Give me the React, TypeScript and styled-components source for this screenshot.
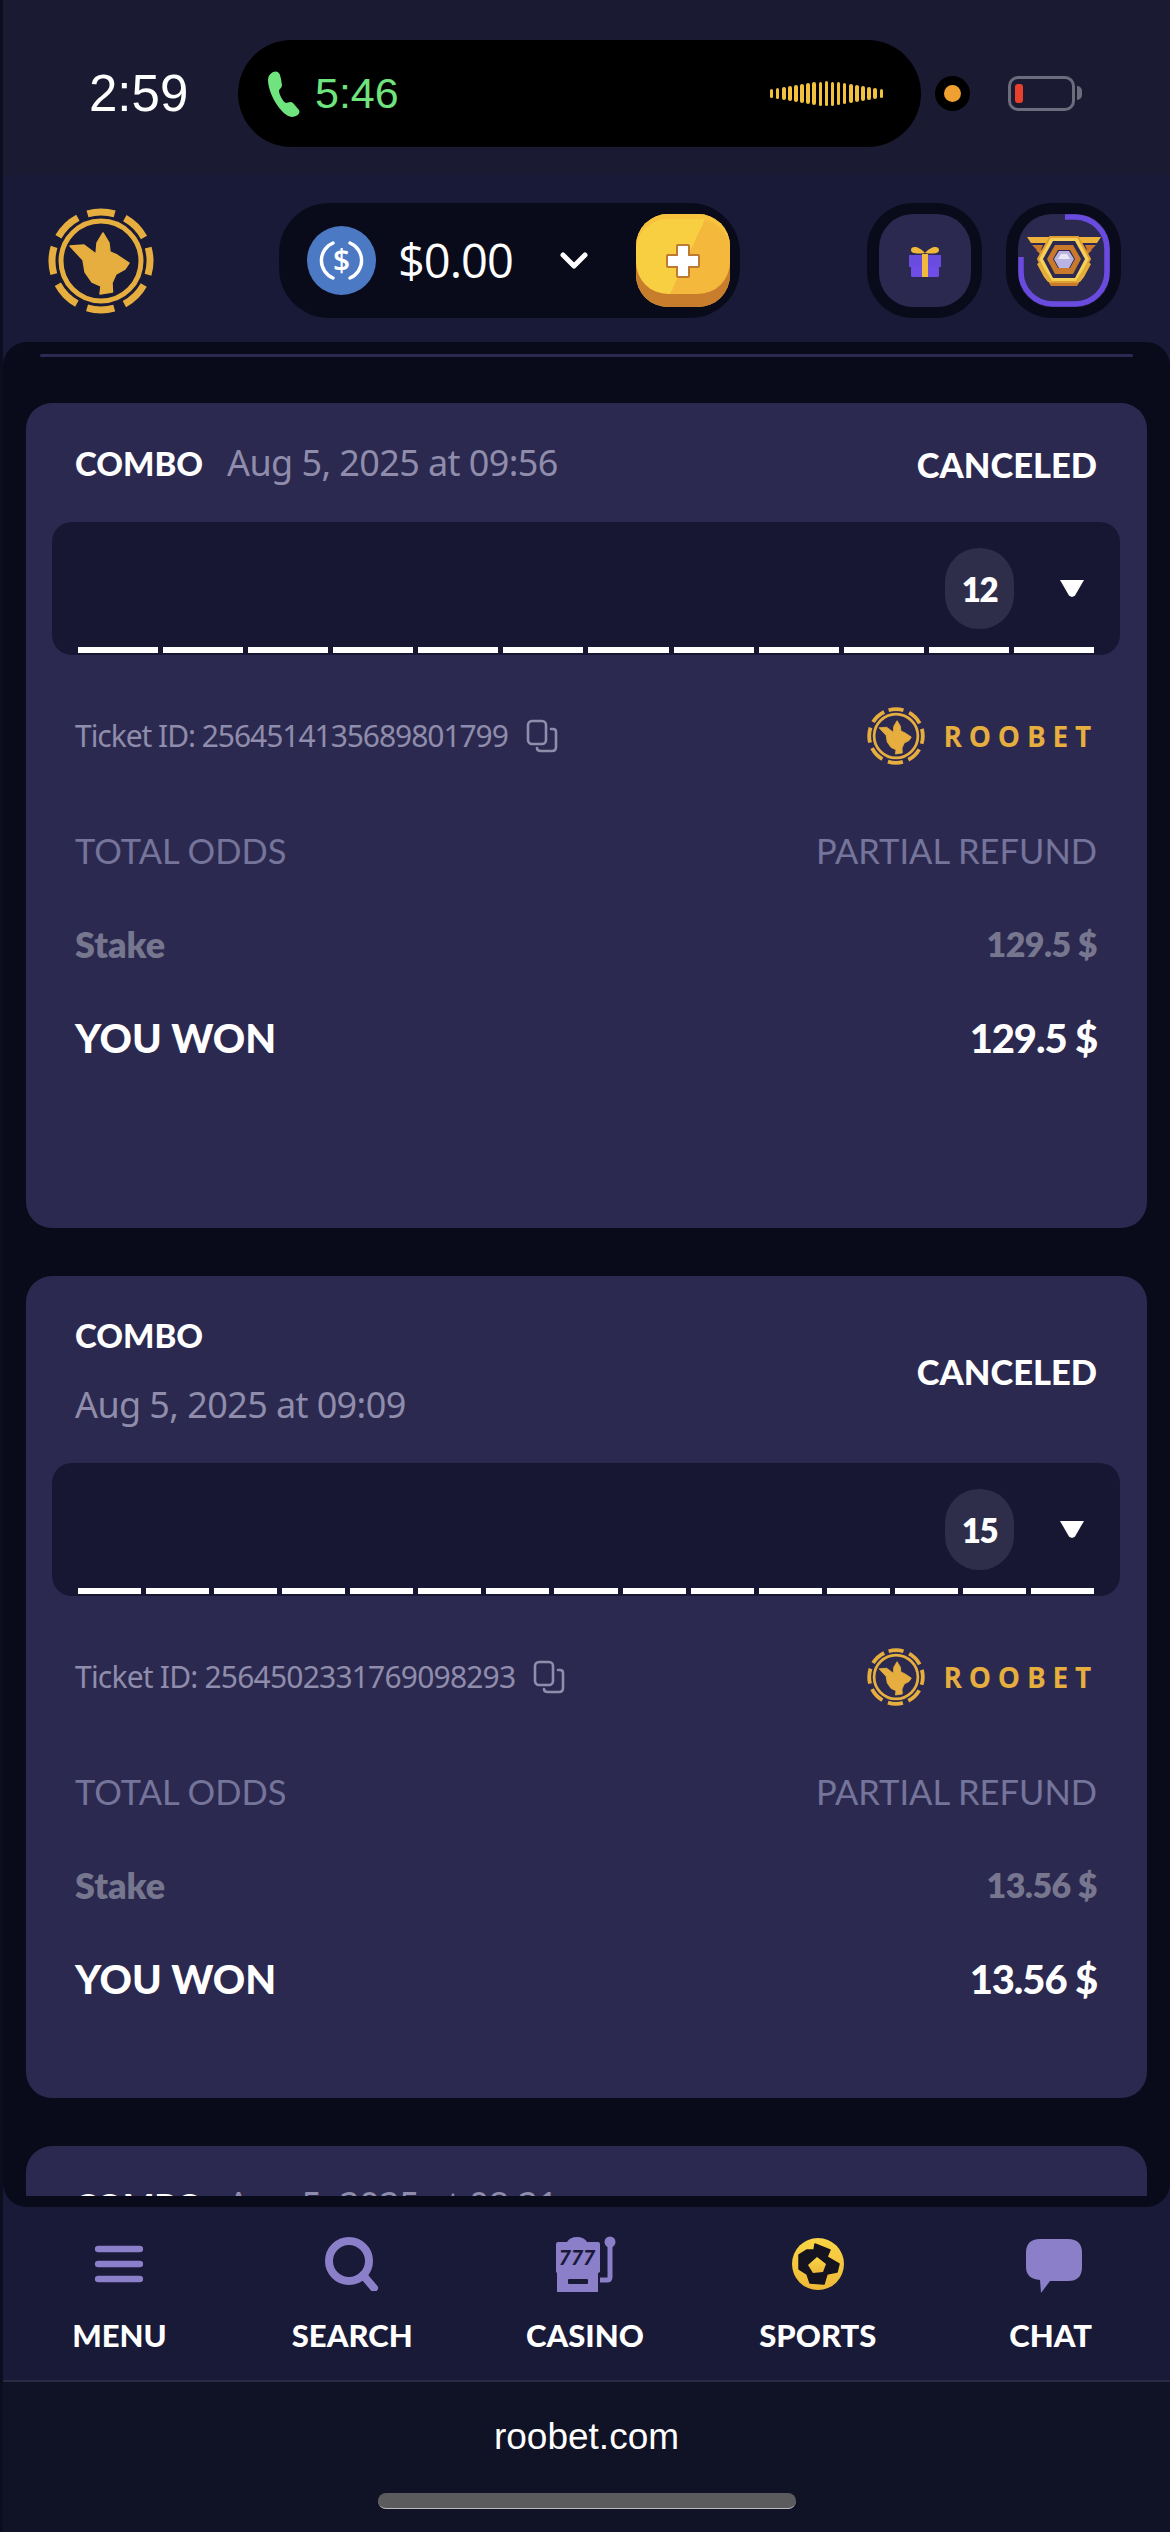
import React from 'react';
import styled, { createGlobalStyle } from 'styled-components';

const GlobalStyle = createGlobalStyle`
  html, body { margin: 0; padding: 0; background: #1a1b33; }
  * { box-sizing: border-box; }
`;

const Screen = styled.div`
  width: 1170px;
  height: 2532px;
  display: flex;
  flex-direction: column;
  overflow: hidden;
  background: #191938;
  font-family: 'Lato', 'Liberation Sans', sans-serif;
  color: #fff;
  border-left: 3px solid #0c0d1e;
`;

const StatusBar = styled.div`
  height: 175px;
  flex: none;
  background: #1a1b33;
  display: flex;
  align-items: flex-start;
  padding: 40px 0 0 0;
`;

const Clock = styled.div`
  width: 235px;
  padding: 28px 0 0 86px;
  font: 500 51px/51px 'Liberation Sans', sans-serif;
  flex: none;
`;

const Island = styled.div`
  width: 683px;
  height: 107px;
  flex: none;
  border-radius: 54px;
  background: #000;
  display: flex;
  align-items: center;
  padding: 0 38px 0 30px;
  color: #6fe37e;
  font: 500 43px/43px 'Liberation Sans', sans-serif;
  gap: 15px;
`;

const Wave = styled.div`
  margin-left: auto;
  display: flex;
  align-items: center;
  gap: 2.6px;
`;

const WaveBar = styled.i<{ $h: number }>`
  display: block;
  width: 3.5px;
  height: ${(p) => p.$h}px;
  border-radius: 2px;
  background: #f2c23c;
`;

const CallDot = styled.div`
  flex: none;
  width: 35px;
  height: 35px;
  margin: 36px 0 0 14px;
  border-radius: 50%;
  background: #000;
  display: flex;
  align-items: center;
  justify-content: center;

  &::after {
    content: '';
    width: 17px;
    height: 17px;
    border-radius: 50%;
    background: #f0a030;
  }
`;

const Battery = styled.div`
  flex: none;
  position: relative;
  width: 67px;
  height: 35px;
  margin: 36px 0 0 38px;
  border: 3px solid #6b6c7c;
  border-radius: 10px;
  padding: 5px 4px;

  &::before {
    content: '';
    display: block;
    width: 8px;
    height: 100%;
    border-radius: 3px;
    background: #e8402c;
  }

  &::after {
    content: '';
    position: absolute;
    right: -10px;
    top: 7px;
    width: 5px;
    height: 14px;
    border-radius: 0 5px 5px 0;
    background: #6b6c7c;
  }
`;

const Header = styled.header`
  height: 167px;
  flex: none;
  display: flex;
  align-items: flex-start;
  padding: 28px 0 0 45px;
`;

const LogoSlot = styled.div`
  flex: none;
  width: 231px;
  padding-top: 5px;
`;

const BalancePill = styled.div`
  flex: none;
  width: 461px;
  height: 115px;
  border-radius: 50px;
  background: #0a0b1a;
  display: flex;
  align-items: center;
  padding: 0 10px 0 28px;
`;

const Amount = styled.span`
  margin-left: 22px;
  font: 500 47px/1 'Open Sans', sans-serif;
  letter-spacing: -1px;
`;

const ChevronSlot = styled.span`
  margin-left: 47px;
  display: flex;
`;

const PlusButton = styled.div`
  margin-left: auto;
  width: 94px;
  height: 93px;
  border-radius: 32px;
  background: linear-gradient(115deg, #f9cf42 0 52%, #f4b93c 52% 100%);
  box-shadow: inset 0 -13px 0 #c77d2c, inset 0 5px 0 #f7c33e;
  display: flex;
  align-items: center;
  justify-content: center;
`;

const IconHolder = styled.div<{ $gap: number }>`
  flex: none;
  width: 115px;
  height: 115px;
  margin-left: ${(p) => p.$gap}px;
  border-radius: 46px;
  background: #0a0b1a;
  display: flex;
  align-items: center;
  justify-content: center;
`;

const IconTile = styled.div`
  position: relative;
  width: 92px;
  height: 93px;
  border-radius: 34px;
  background: #2c2950;
  display: flex;
  align-items: center;
  justify-content: center;
`;

const Ring = styled.svg`
  position: absolute;
  inset: 0;
`;

const Panel = styled.main`
  height: 865px;
  flex: 1 0 auto;
  background: #0a0b1a;
  border-radius: 24px;
  padding: 12px 23px 11px;
  display: flex;
  flex-direction: column;
`;

const Divider = styled.div`
  height: 3px;
  flex: none;
  margin: 0 14px 46px;
  background: #2c2a52;
  border-radius: 2px;
`;

const Feed = styled.div`
  flex: 1;
  overflow: hidden;
  display: flex;
  flex-direction: column;
  gap: 48px;
`;

const Card = styled.section<{ $bottom: number }>`
  flex: none;
  background: #2c2950;
  border-radius: 26px;
  padding: 32px 27px ${(p) => p.$bottom}px 26px;
`;

const CardTop = styled.div<{ $stacked?: boolean }>`
  display: flex;
  align-items: center;
  justify-content: space-between;
  padding: 0 23px ${(p) => (p.$stacked ? 17 : 0)}px;
  min-height: ${(p) => (p.$stacked ? 140 : 54)}px;
  margin-bottom: ${(p) => (p.$stacked ? 15 : 32)}px;
`;

const BetTitle = styled.div<{ $stacked?: boolean }>`
  display: flex;
  flex-direction: ${(p) => (p.$stacked ? 'column' : 'row')};
  align-items: ${(p) => (p.$stacked ? 'flex-start' : 'center')};
  gap: ${(p) => (p.$stacked ? '20px' : '24px')};
`;

const BetType = styled.span`
  font-size: 33px;
  font-weight: 900;
  line-height: 50px;
`;

const BetDate = styled.span`
  font: 400 36px/50px 'Noto Sans', sans-serif;
  color: #8f8dab;
  letter-spacing: -0.6px;
`;

const BetStatus = styled.span`
  margin-top: 5px;
  font-size: 34.5px;
  font-weight: 900;
  line-height: 50px;
`;

const Legs = styled.div`
  height: 133px;
  background: #181733;
  border-radius: 20px;
  padding: 26px 26px 3px;
  display: flex;
  flex-direction: column;
`;

const LegsTop = styled.div`
  display: flex;
  align-items: center;
  justify-content: flex-end;
  flex: 1;
  align-self: stretch;
  gap: 46px;
  padding-bottom: 18px;
`;

const CountBadge = styled.div`
  width: 69px;
  height: 81px;
  border-radius: 34px;
  background: #2f2e4a;
  display: flex;
  align-items: center;
  justify-content: center;
  font-size: 33px;
  font-weight: 800;
  letter-spacing: -1.5px;
`;

const Caret = styled.div`
  width: 24px;
  height: 17px;
  margin-right: 10px;
  clip-path: polygon(0 0, 100% 0, 62% 92%, 50% 100%, 38% 92%);
  background: #fff;
`;

const SegmentRow = styled.div`
  display: flex;
  gap: 5px;
`;

const Segment = styled.i`
  display: block;
  flex: 1;
  height: 6px;
  background: #fff;
`;

const TicketRow = styled.div`
  display: flex;
  align-items: center;
  justify-content: space-between;
  height: 60px;
  margin: 51px 0 0;
  padding: 0 29px 0 23px;
`;

const TicketId = styled.div<{ $spacing: number }>`
  display: flex;
  align-items: center;
  gap: 18px;
  font: 400 30px/1 'Noto Sans', sans-serif;
  letter-spacing: ${(p) => p.$spacing}px;
  color: #8f8dab;
`;

const Brand = styled.div`
  display: flex;
  align-items: center;
  gap: 18px;
`;

const BrandName = styled.span`
  font: 700 28px/1 'Open Sans', sans-serif;
  letter-spacing: 6.8px;
  color: #e5ae3e;
  margin-right: -7px;
`;

const Line = styled.div<{ $top: number }>`
  display: flex;
  justify-content: space-between;
  align-items: center;
  padding: 0 23px;
  margin-top: ${(p) => p.$top}px;
`;

const OddsText = styled.span`
  font-size: 34.5px;
  font-weight: 400;
  line-height: 44px;
  color: #75749a;
`;

const StakeText = styled.span`
  font-size: 36px;
  font-weight: 800;
  line-height: 44px;
  color: #77768f;
`;

const StakeValue = styled(StakeText)`
  font-size: 34px;
  letter-spacing: -0.6px;
`;

const WonText = styled.span`
  font-size: 40px;
  font-weight: 900;
  line-height: 50px;
  color: #fff;
`;

const WonValue = styled(WonText)`
  letter-spacing: -1.1px;
`;

const BottomNav = styled.nav`
  height: 175px;
  flex: none;
  display: grid;
  grid-template-columns: repeat(5, 1fr);
  padding: 27px 3px 0 0;
  border-bottom: 2px solid #2a2a44;
`;

const NavItem = styled.div`
  display: flex;
  flex-direction: column;
  align-items: center;
  gap: 21px;
`;

const NavIcon = styled.div`
  height: 60px;
  display: flex;
  align-items: center;
  justify-content: center;
`;

const NavLabel = styled.span`
  font-size: 31px;
  font-weight: 900;
  line-height: 40px;
`;

const BrowserBar = styled.footer`
  height: 150px;
  flex: none;
  background: #101226;
  display: flex;
  flex-direction: column;
  align-items: center;
  padding-top: 34px;
`;

const UrlText = styled.span`
  font: 400 37px/42px 'Liberation Sans', sans-serif;
`;

const HomeBar = styled.div`
  width: 418px;
  height: 16px;
  margin-top: 35px;
  border-radius: 8px;
  background: #5b5b5e;
  border-bottom: 1px solid #bbb;
`;

const GOLD = '#e5ae3e';
const NAV_PURPLE = '#8b7fc9';

const RooLogo = ({ size }: { size: number }) => (
  <svg width={size} height={size} viewBox="0 0 106 106" style={{ display: 'block' }}>
    <circle
      cx="53"
      cy="53"
      r="49"
      fill="none"
      stroke={GOLD}
      strokeWidth="7"
      strokeDasharray="27.5 11"
      transform="rotate(-106 53 53)"
    />
    <circle cx="53" cy="53" r="40" fill="none" stroke={GOLD} strokeWidth="5" />
    <path
      d="M22 38 L36 37 L48 46 L49 35 L55 25 L61 35 L62 44 L69 47 L81 55 L77 61 L68 66 L64 75 L64.5 84 L52 86 L53 78 L44 74 L37 64 L35 52Z"
      fill={GOLD}
      stroke={GOLD}
      strokeWidth="1.5"
      strokeLinejoin="round"
    />
  </svg>
);

const PhoneIcon = () => (
  <svg width="32" height="46" viewBox="0 0 32 46">
    <path
      d="M5 1 C10 -1 12 2 13 8 L14 14 C14 17 11 18 11 20 C11 23 15 31 18 32 C20 32 22 30 25 32 L31 39 C33 43 28 46 24 46 C13 45 0 22 0 9 C0 5 2 3 5 1Z"
      fill="#6fe37e"
    />
  </svg>
);

const UsdcIcon = () => (
  <svg width="69" height="69" viewBox="0 0 69 69" style={{ flex: 'none' }}>
    <circle cx="34.5" cy="34.5" r="34.5" fill="#4b79c4" />
    <path d="M26 17 A19 19 0 0 0 26 52" fill="none" stroke="#fff" strokeWidth="3.4" strokeLinecap="round" />
    <path d="M43 17 A19 19 0 0 1 43 52" fill="none" stroke="#fff" strokeWidth="3.4" strokeLinecap="round" />
    <text x="34.5" y="45" textAnchor="middle" fontFamily="Open Sans" fontWeight="600" fontSize="30" fill="#fff">
      $
    </text>
  </svg>
);

const ChevronIcon = () => (
  <svg width="28" height="20" viewBox="0 0 28 20">
    <path d="M3 4 L14 15 L25 4" fill="none" stroke="#fff" strokeWidth="5" strokeLinecap="round" strokeLinejoin="round" />
  </svg>
);

const PlusIcon = () => (
  <svg width="40" height="40" viewBox="0 0 40 40">
    <path
      d="M15 5 H25 V15 H35 V25 H25 V35 H15 V25 H5 V15 H15Z"
      fill="#fff"
      stroke="#bd7a30"
      strokeWidth="4"
      strokeLinejoin="round"
      paintOrder="stroke"
    />
  </svg>
);

const GiftIcon = () => (
  <svg width="34" height="34" viewBox="0 0 34 34">
    <path d="M17 9 C10 1 3 2 3 6 C3 10 10 10 17 9 C24 10 31 10 31 6 C31 2 24 1 17 9Z" fill="#f0b93a" />
    <path d="M1 11 H33 V23 H1Z" fill="#6a4be0" />
    <path d="M3 22 H31 V32 Q31 33 29 33 H5 Q3 33 3 32Z" fill="#6d4de6" />
    <path d="M14 10 H20 V33 H14Z" fill="#f0b93a" />
  </svg>
);

const RankIcon = () => (
  <svg width="74" height="50" viewBox="0 0 74 50" style={{ position: 'relative' }}>
    <path d="M0 1 H74 L70 7 H4Z" fill="#eeb33c" />
    <path d="M5 9 H16 L14 14 H10Z M9 14 H17 L15 20Z" fill="#c9782c" />
    <path d="M69 9 H58 L60 14 H64Z M65 14 H57 L59 20Z" fill="#c9782c" />
    <path d="M23 1 H51 L63 23 L51 46 H23 L11 23Z" fill="#f4d05a" stroke="#e0a030" strokeWidth="2" />
    <path d="M26 5 H48 L58 23 L48 42 H26 L16 23Z" fill="#2c2950" />
    <path d="M28 9 H46 L54 23 L46 38 H28 L20 23Z" fill="#c9782c" />
    <path d="M31 14 H43 L48 23 L43 32 H31 L26 23Z" fill="#2c2950" />
    <path d="M32 15 H42 L47 23 L42 32 H32 L27 23Z" fill="#b9b3e2" />
    <path d="M34 18 H40 L43 23 H31Z" fill="#e8e6f7" />
    <path d="M10 28 L17 41 L21 46 H26 L13 26Z M64 28 L57 41 L53 46 H48 L61 26Z" fill="#e6ac38" />
    <path d="M22 47 H52 L50 50 H24Z" fill="#c9782c" />
  </svg>
);

const RankRing = () => (
  <Ring width="92" height="93" viewBox="0 0 92 93">
    <path
      d="M47 3 H57 A32 32 0 0 1 89 35 V58 A32 32 0 0 1 57 90 H35 A32 32 0 0 1 3 58 V43"
      fill="none"
      stroke="#6a4be0"
      strokeWidth="5.5"
    />
  </Ring>
);

const CopyIcon = () => (
  <svg width="32" height="34" viewBox="0 0 32 34" fill="none" stroke="#8f8dab" strokeWidth="2.6">
    <rect x="2" y="2" width="18" height="23" rx="4" />
    <path d="M25 10 H27 Q30 10 30 13 V28 Q30 32 26 32 H15 Q11 32 11 29" strokeLinecap="round" />
  </svg>
);

const MenuIcon = () => (
  <svg width="48" height="40" viewBox="0 0 48 40">
    <path d="M3 5 H45 M3 20 H45 M3 35 H45" stroke={NAV_PURPLE} strokeWidth="6.5" strokeLinecap="round" />
  </svg>
);

const SearchIcon = () => (
  <svg width="54" height="54" viewBox="0 0 54 54" fill="none" stroke={NAV_PURPLE}>
    <circle cx="24" cy="24" r="20" strokeWidth="8" />
    <path d="M38 38 L49 51" strokeWidth="8" strokeLinecap="round" />
  </svg>
);

const SlotIcon = () => (
  <svg width="62" height="56" viewBox="0 0 62 56">
    <path
      d="M2 8 Q2 6 4 6 H13 Q16 1 23 1 Q30 1 33 6 H44 Q46 6 46 8 V36 L44 37 V56 H3 V37 L2 36Z"
      fill={NAV_PURPLE}
    />
    <text x="23" y="29" textAnchor="middle" fontFamily="Lato" fontStyle="italic" fontWeight="900" fontSize="21" fill="#191938">
      777
    </text>
    <rect x="14" y="43" width="20" height="5" rx="1" fill="#191938" />
    <circle cx="56" cy="6" r="5.5" fill={NAV_PURPLE} />
    <path d="M56 8 V41 Q56 44 53 44 H46" fill="none" stroke={NAV_PURPLE} strokeWidth="5" />
  </svg>
);

const BallIcon = () => (
  <svg width="52" height="52" viewBox="0 0 52 52">
    <defs>
      <linearGradient id="ballGold" x1="0" y1="0" x2="0" y2="1">
        <stop offset="0" stopColor="#fad545" />
        <stop offset="1" stopColor="#eeb938" />
      </linearGradient>
    </defs>
    <circle cx="26" cy="26" r="26" fill="url(#ballGold)" />
    <path
      d="M23 6 L38 12 L35 19 L47 26 L45 34 L35 36 L32 46 L18 45 L15 36 L7 31 L7 17 L15 12 L22 12Z"
      fill="#14131f"
      stroke="#14131f"
      strokeWidth="1.5"
      strokeLinejoin="round"
    />
    <path d="M25 19 L34 26 L31 34 L21 35 L16 27Z" fill="url(#ballGold)" />
  </svg>
);

const ChatIcon = () => (
  <svg width="62" height="60" viewBox="-6 -5 62 60">
    <path
      d="M14 0 H42 Q56 0 56 14 V28 Q56 42 42 42 H24 L15 54 L14 41 Q0 40 0 28 V14 Q0 0 14 0Z"
      fill={NAV_PURPLE}
    />
  </svg>
);

type Bet = {
  date: string;
  stacked?: boolean;
  legs: number;
  ticket: string;
  idSpacing: number;
  stake: string;
  bottom: number;
};

const bets: Bet[] = [
  { date: 'Aug 5, 2025 at 09:56', legs: 12, ticket: '2564514135689801799', idSpacing: -1.05, stake: '129.5 $', bottom: 165 },
  { date: 'Aug 5, 2025 at 09:09', stacked: true, legs: 15, ticket: '2564502331769098293', idSpacing: -0.8, stake: '13.56 $', bottom: 94 },
];

const navItems = [
  { label: 'MENU', icon: <MenuIcon /> },
  { label: 'SEARCH', icon: <SearchIcon /> },
  { label: 'CASINO', icon: <SlotIcon /> },
  { label: 'SPORTS', icon: <BallIcon /> },
  { label: 'CHAT', icon: <ChatIcon /> },
];

const waveHeights = [9, 11, 13, 15, 17, 19, 21, 23, 24, 25, 24, 23, 21, 19, 17, 15, 13, 11, 9];

export default function App() {
  return (
    <Screen>
      <GlobalStyle />
      <StatusBar>
        <Clock>2:59</Clock>
        <Island>
          <PhoneIcon />
          <span>5:46</span>
          <Wave>
            {waveHeights.map((h, i) => (
              <WaveBar key={i} $h={h} />
            ))}
          </Wave>
        </Island>
        <CallDot />
        <Battery />
      </StatusBar>

      <Header>
        <LogoSlot>
          <RooLogo size={106} />
        </LogoSlot>
        <BalancePill>
          <UsdcIcon />
          <Amount>$0.00</Amount>
          <ChevronSlot>
            <ChevronIcon />
          </ChevronSlot>
          <PlusButton>
            <PlusIcon />
          </PlusButton>
        </BalancePill>
        <IconHolder $gap={127}>
          <IconTile>
            <GiftIcon />
          </IconTile>
        </IconHolder>
        <IconHolder $gap={24}>
          <IconTile>
            <RankRing />
            <RankIcon />
          </IconTile>
        </IconHolder>
      </Header>

      <Panel>
        <Divider />
        <Feed>
          {bets.map((bet) => (
            <Card key={bet.ticket} $bottom={bet.bottom}>
              <CardTop $stacked={bet.stacked}>
                <BetTitle $stacked={bet.stacked}>
                  <BetType>COMBO</BetType>
                  <BetDate>{bet.date}</BetDate>
                </BetTitle>
                <BetStatus>CANCELED</BetStatus>
              </CardTop>
              <Legs>
                <LegsTop>
                  <CountBadge>{bet.legs}</CountBadge>
                  <Caret />
                </LegsTop>
                <SegmentRow>
                  {Array.from({ length: bet.legs }, (_, i) => (
                    <Segment key={i} />
                  ))}
                </SegmentRow>
              </Legs>
              <TicketRow>
                <TicketId $spacing={bet.idSpacing}>
                  Ticket ID: {bet.ticket}
                  <CopyIcon />
                </TicketId>
                <Brand>
                  <RooLogo size={58} />
                  <BrandName>ROOBET</BrandName>
                </Brand>
              </TicketRow>
              <Line $top={63}>
                <OddsText>TOTAL ODDS</OddsText>
                <OddsText>PARTIAL REFUND</OddsText>
              </Line>
              <Line $top={49}>
                <StakeText>Stake</StakeText>
                <StakeValue>{bet.stake}</StakeValue>
              </Line>
              <Line $top={47}>
                <WonText>YOU WON</WonText>
                <WonValue>{bet.stake}</WonValue>
              </Line>
            </Card>
          ))}
          <Card $bottom={96}>
            <CardTop>
              <BetTitle>
                <BetType>COMBO</BetType>
                <BetDate>Aug 5, 2025 at 08:21</BetDate>
              </BetTitle>
            </CardTop>
          </Card>
        </Feed>
      </Panel>

      <BottomNav>
        {navItems.map((item) => (
          <NavItem key={item.label}>
            <NavIcon>{item.icon}</NavIcon>
            <NavLabel>{item.label}</NavLabel>
          </NavItem>
        ))}
      </BottomNav>

      <BrowserBar>
        <UrlText>roobet.com</UrlText>
        <HomeBar />
      </BrowserBar>
    </Screen>
  );
}
